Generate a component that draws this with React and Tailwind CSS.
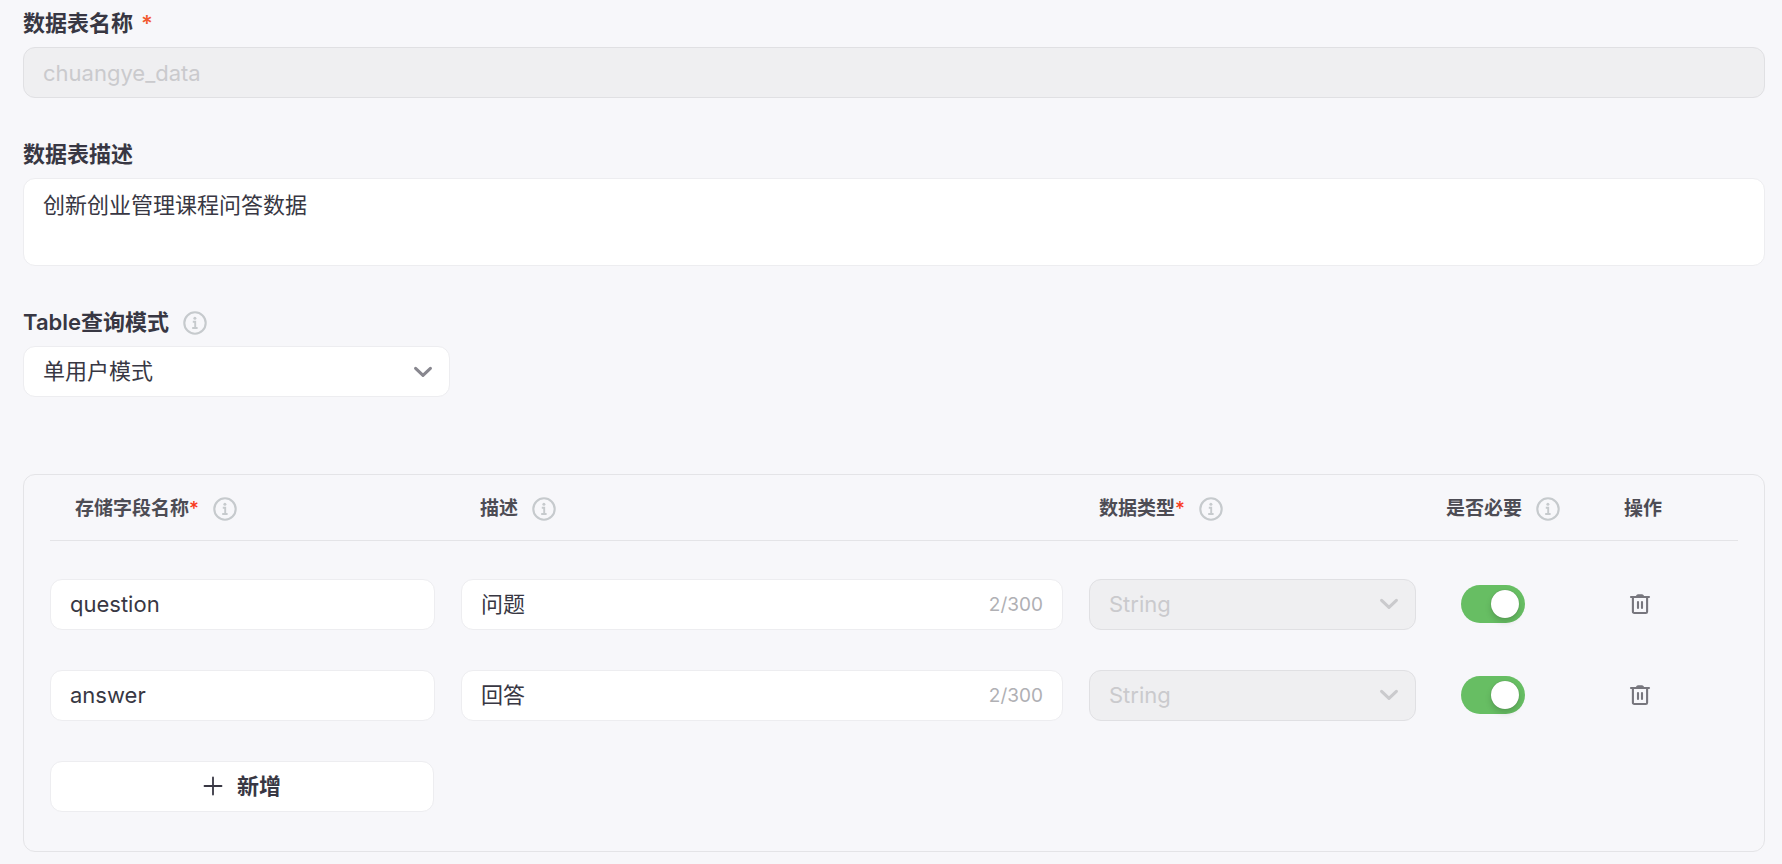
import React, { useState } from "react";
import clsx from "clsx";

const box = "h-[51px] w-full rounded-xl border px-[19px] text-[22px] outline-none";
const normal = "border-[#ededf0] bg-white text-[#383743]";
const locked = "border-[#e0e0e3] bg-[#efeff1] text-[#cacacd]";

function InfoIcon() {
  return (
    <svg viewBox="0 0 24 24" className="size-6 shrink-0 text-[#c6cacd]" fill="none" stroke="currentColor" aria-hidden="true">
      <circle cx="12" cy="12" r="10.7" strokeWidth="2.1" />
      <circle cx="11.9" cy="7.3" r="1.5" fill="currentColor" stroke="none" />
      <path d="M9.800 10.800h2.400v6M9.200 17h5.400" strokeWidth="1.9" />
    </svg>
  );
}

function Chevron() {
  return (
    <svg viewBox="0 0 20 20" className="size-5" fill="none" stroke="currentColor" strokeWidth="3.1" strokeLinecap="round" strokeLinejoin="round" aria-hidden="true">
      <path d="M2.6 6.3 10 13.300l7.400-7" />
    </svg>
  );
}

function TrashIcon() {
  return (
    <svg viewBox="0 0 22 22" className="size-[22px]" fill="none" stroke="currentColor" strokeWidth="2.1" strokeLinecap="round" strokeLinejoin="round" aria-hidden="true">
      <path d="M2 4h18" />
      <path d="M6.800 4c.2-1.800 1-2.800 2.300-2.800h3.800c1.300 0 2.100 1 2.300 2.800z" fill="currentColor" stroke="none" />
      <path d="M3.900 4v14.700a1.300 1.300 0 0 0 1.300 1.300h11.600a1.300 1.300 0 0 0 1.300-1.300V4" />
      <path d="M9 9v6M13 9v6" />
    </svg>
  );
}

function Select({ disabled, options, ...props }) {
  return (
    <div className="relative">
      <select {...props} disabled={disabled} className={clsx(box, "block appearance-none pr-12 opacity-100", disabled ? locked : normal)}>
        {options.map((o) => (
          <option key={o}>{o}</option>
        ))}
      </select>
      <span className={clsx("pointer-events-none absolute inset-y-0 right-[17px] flex items-center", disabled ? "text-[#cacacd]" : "text-[#88878f]")}>
        <Chevron />
      </span>
    </div>
  );
}

const columns = [
  { title: "存储字段名称", required: true, info: true, className: "w-[411px] pl-[25px]" },
  { title: "描述", info: true, className: "pl-[19px]" },
  { title: "数据类型", required: true, info: true, className: "w-[353px] pl-[10px]" },
  { title: "是否必要", info: true, className: "w-[166px] pl-1" },
  { title: "操作", className: "w-[130px] pl-4" },
];

export default function App() {
  const [fields, setFields] = useState([
    { name: "question", desc: "问题", required: true },
    { name: "answer", desc: "回答", required: true },
  ]);

  const update = (index, patch) =>
    setFields(fields.map((f, i) => (i === index ? { ...f, ...patch } : f)));

  return (
    <div className="min-h-screen bg-[#f7f7fa] pt-2 pr-[17px] pb-3 pl-[23px] font-['Inter','Noto_Sans_CJK_SC',sans-serif] text-[22px] text-[#383743]">
      <div className="mb-[41px]">
        <label htmlFor="table-name" className="mb-2 flex h-[31px] items-center gap-2 font-semibold">
          数据表名称
          <span className="text-[#f2592f]">*</span>
        </label>
        <input id="table-name" disabled defaultValue="chuangye_data" className={clsx(box, locked, "block")} />
      </div>

      <div className="mb-[41px]">
        <label htmlFor="table-desc" className="mb-2 flex h-[31px] items-center font-semibold">
          数据表描述
        </label>
        <textarea
          id="table-desc"
          defaultValue="创新创业管理课程问答数据"
          className={clsx("block h-[88px] w-full resize-none rounded-xl border px-[19px] py-[11px] leading-[30px] outline-none", normal)}
        />
      </div>

      <div className="mb-[77px]">
        <div className="mb-2 flex h-[31px] items-center gap-[14px]">
          <label htmlFor="query-mode" className="font-semibold">Table查询模式</label>
          <InfoIcon />
        </div>
        <div className="w-[427px]">
          <Select id="query-mode" options={["单用户模式"]} />
        </div>
      </div>

      <div className="rounded-xl border border-[#e4e4e7] px-[26px] pb-[39px]">
        <table className="w-full table-fixed">
          <thead>
            <tr className="border-b border-[#e4e4e7]">
              {columns.map((c) => (
                <th key={c.title} className={clsx("h-[65px] pt-[3px] text-left text-[19px] font-semibold text-[#4d4c54]", c.className)}>
                  <div className="flex items-center gap-[14px]">
                    <span>
                      {c.title}
                      {c.required && <span className="font-medium text-[#f93920]">*</span>}
                    </span>
                    {c.info && <InfoIcon />}
                  </div>
                </th>
              ))}
            </tr>
          </thead>
          <tbody className="before:block before:h-[38px]">
            {fields.map((f, i) => (
              <tr key={i}>
                <td className="pr-[26px] pb-10">
                  <input
                    aria-label="存储字段名称"
                    value={f.name}
                    onChange={(e) => update(i, { name: e.target.value })}
                    className={clsx(box, normal, "block")}
                  />
                </td>
                <td className="pr-[26px] pb-10">
                  <div className={clsx(box, normal, "flex items-center")}>
                    <input
                      aria-label="描述"
                      value={f.desc}
                      maxLength={300}
                      onChange={(e) => update(i, { desc: e.target.value })}
                      className="min-w-0 flex-1 outline-none"
                    />
                    <span className="pt-0.5 text-[19px] text-[#b0b0b4]">{f.desc.length}/300</span>
                  </div>
                </td>
                <td className="pr-[26px] pb-10">
                  <Select aria-label="数据类型" disabled options={["String"]} />
                </td>
                <td className="pb-10 pl-[19px]">
                  <input
                    type="checkbox"
                    role="switch"
                    aria-label="是否必要"
                    checked={f.required}
                    onChange={(e) => update(i, { required: e.target.checked })}
                    className="flex h-[38px] w-16 appearance-none items-center rounded-full bg-[#cfcfd4] px-[6px] before:size-7 before:rounded-full before:bg-white before:shadow-[0_4px_6px_rgba(0,0,0,0.15),0_0_1px_rgba(0,0,0,0.3)] checked:justify-end checked:bg-[#67be63]"
                  />
                </td>
                <td className="pb-10 pl-[21px]">
                  <button
                    type="button"
                    aria-label="删除"
                    onClick={() => setFields(fields.filter((_, n) => n !== i))}
                    className="block text-[#77767d]"
                  >
                    <TrashIcon />
                  </button>
                </td>
              </tr>
            ))}
          </tbody>
        </table>

        <button
          type="button"
          onClick={() => setFields([...fields, { name: "", desc: "", required: true }])}
          className="flex h-[51px] w-[384px] items-center justify-center gap-[14px] rounded-xl border border-[#ededf0] bg-white font-semibold"
        >
          <svg viewBox="0 0 20 20" className="size-5" stroke="currentColor" strokeWidth="1.8" strokeLinecap="round" aria-hidden="true">
            <path d="M10 1.500v17M1.500 10h17" />
          </svg>
          新增
        </button>
      </div>
    </div>
  );
}
